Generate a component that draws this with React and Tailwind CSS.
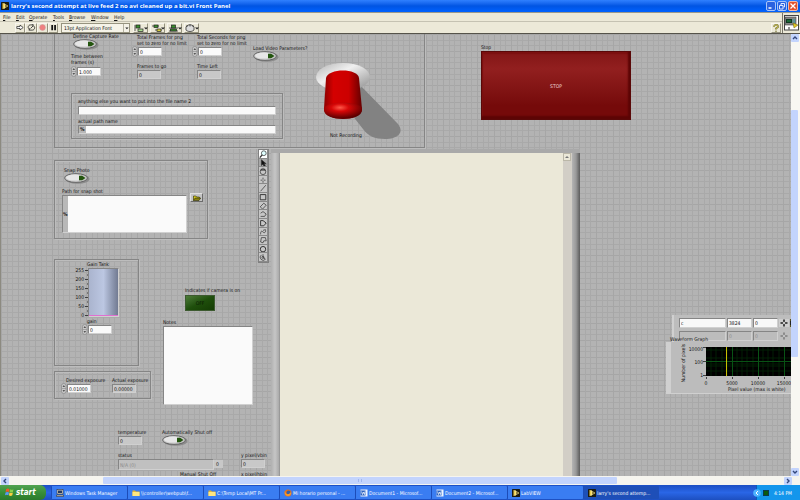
import React from "react";

const GRID =
  "bg-[#b3b3b3] [background-image:linear-gradient(90deg,#a6a6a6_1px,transparent_1px,transparent_6px,#a9a9a9_6px,#a9a9a9_7px,transparent_7px,transparent_11px,#a9a9a9_11px,#a9a9a9_12px,transparent_12px),linear-gradient(#a6a6a6_1px,transparent_1px,transparent_6px,#a9a9a9_6px,#a9a9a9_7px,transparent_7px,transparent_11px,#a9a9a9_11px,#a9a9a9_12px,transparent_12px)] [background-size:17px_17px]";
const SUNKEN = "border border-t-[#858585] border-l-[#858585] border-b-[#d0d0d0] border-r-[#d0d0d0]";
const GROUP = "border border-[#858585] shadow-[inset_1px_1px_0_#bdbdbd,1px_1px_0_#bdbdbd]";

function LabviewIcon() {
  return (
    <svg viewBox="0 0 16 16" className="w-2 h-2 shrink-0">
      <rect width="16" height="16" rx="1" fill="#1c1b10" />
      <path d="M3 3h4v10H3M7 4l7 4-7 4z" fill="#f0d050" stroke="#f7e896" strokeWidth="1" />
      <path d="M8 8h4M10 6v4" stroke="#222" strokeWidth="1" />
    </svg>
  );
}

function FolderIcon() {
  return (
    <svg viewBox="0 0 16 16" className="w-2 h-2 shrink-0">
      <path d="M1 3h5l2 2h7v9H1z" fill="#e8b830" />
      <path d="M1 6h14v8H1z" fill="#ffe680" />
    </svg>
  );
}

function WordIcon() {
  return (
    <svg viewBox="0 0 16 16" className="w-2 h-2 shrink-0">
      <rect x="1" y="1" width="14" height="14" fill="#eef4ff" />
      <rect x="1" y="3" width="10" height="10" fill="#2b62c0" />
      <path d="M3 5l2 6 2-5 2 5 1-6" fill="none" stroke="#fff" strokeWidth="1.4" />
    </svg>
  );
}

function FirefoxIcon() {
  return (
    <svg viewBox="0 0 16 16" className="w-2 h-2 shrink-0">
      <circle cx="8" cy="8" r="7" fill="#e8701a" />
      <circle cx="9" cy="7" r="4" fill="#3660a8" />
      <path d="M2 4c1 6 4 7 8 6l4-4c1 5-3 9-7 8S0 9 2 4z" fill="#f79a28" />
    </svg>
  );
}

function ComputerIcon() {
  return (
    <svg viewBox="0 0 16 16" className="w-2 h-2 shrink-0">
      <rect x="2" y="1" width="12" height="9" fill="#d8d4c8" stroke="#222" />
      <rect x="4" y="3" width="8" height="5" fill="#26395c" />
      <path d="M1 12h14v3H1z" fill="#c8c4b8" stroke="#222" />
    </svg>
  );
}

function Spinner() {
  return (
    <svg viewBox="0 0 6 11" className="w-[6px] h-[11px] shrink-0">
      <rect x="0.5" y="0.5" width="4.5" height="10" rx="2.2" fill="#c9c9c9" stroke="#888" strokeWidth="0.7" />
      <path d="M1.5 4L2.8 2l1.3 2zM1.5 7l1.3 2 1.3-2z" fill="#555" />
      <path d="M1 5.5h4" stroke="#888" strokeWidth="0.6" />
    </svg>
  );
}

function Numeric({ label, value, spinner, inset, readOnly }) {
  return (
    <label className="block w-6 shrink-0 whitespace-pre">
      <span className="block">{label}</span>
      <span className={inset ? "flex items-center pt-px" : spinner ? "flex items-center -ml-[5px]" : "flex pt-px"}>
        {spinner && <Spinner />}
        <input
          readOnly={readOnly}
          defaultValue={value}
          className={SUNKEN + " block w-6 h-[9px] shrink-0 px-px " + (readOnly ? "bg-[#c8c8c8]" : "bg-[#fafafa]")}
        />
      </span>
    </label>
  );
}

function OvalButton({ label }) {
  return (
    <div className="flex flex-col items-start whitespace-nowrap">
      <span>{label}</span>
      <button aria-label={label} className="block w-[26px] h-[11px]">
        <svg viewBox="0 0 26 11" className="w-full h-full">
          <ellipse cx="13.5" cy="6" rx="12" ry="4.8" fill="#8b8b8b" />
          <ellipse cx="12" cy="5" rx="11.4" ry="4.4" fill="#c8c8c8" stroke="#606060" strokeWidth="0.9" />
          <ellipse cx="10.5" cy="4.6" rx="8.5" ry="3" fill="#e6e6e6" />
          <path d="M15 2.8h3.2l3.2 2.1-3.2 2.3H15z" fill="#23550e" />
        </svg>
      </button>
    </div>
  );
}

function RecordSwitch() {
  return (
    <svg viewBox="0 0 90 78" className="w-[90px] h-[78px]">
      <defs>
        <linearGradient id="plate" x1="0" y1="0" x2="1" y2="1">
          <stop offset="0" stopColor="#b4b4b4" />
          <stop offset="0.4" stopColor="#f0f0f0" />
          <stop offset="1" stopColor="#8a8a8a" />
        </linearGradient>
        <linearGradient id="cap" x1="0" x2="1">
          <stop offset="0" stopColor="#8c0000" />
          <stop offset="0.25" stopColor="#d40000" />
          <stop offset="0.65" stopColor="#cc0000" />
          <stop offset="1" stopColor="#620000" />
        </linearGradient>
        <radialGradient id="tip" cx="0.42" cy="0.3" r="0.65">
          <stop offset="0" stopColor="#ff5a4a" />
          <stop offset="0.35" stopColor="#d80808" />
          <stop offset="1" stopColor="#5c0000" />
        </radialGradient>
      </defs>
      <path d="M44 22L83 62c7 9-1 15-13 15-10 0-17-3-22-10L30 44z" fill="#828282" />
      <ellipse cx="28" cy="15" rx="27" ry="14" fill="url(#plate)" />
      <path d="M11 16C13 6 43 6 44 16l3 31c0 13-38 13-38 0z" fill="url(#cap)" />
      <path d="M9 46C12 39 44 39 47 46v2c0 12-38 12-38 0z" fill="url(#tip)" />
    </svg>
  );
}

function CaptureGroup() {
  return (
    <section className="flex w-[371px] h-[114px] shrink-0 border border-t-0 border-[#858585] shadow-[1px_1px_0_#bdbdbd]">
      <div className="w-[228px] shrink-0 pl-4">
        <div className="flex h-[59px]">
          <div className="w-[66px] shrink-0">
            <div className="pl-[2px] -mt-px"><OvalButton label="Define Capture Rate" /></div>
            <div className="pt-[3px]">
              <Numeric label={"Time between\nframes (s)"} value="1.000" spinner inset />
            </div>
          </div>
          <div className="w-[60px] shrink-0 space-y-[6px]">
            <Numeric label={"Total Frames for png\nset to zero for no limit"} value="0" spinner />
            <Numeric label="Frames to go" value="0" readOnly />
          </div>
          <div className="w-14 shrink-0 space-y-[6px]">
            <Numeric label={"Total Seconds for png\nset to zero for no limit"} value="0" spinner />
            <Numeric label="Time Left" value="0" readOnly />
          </div>
          <div className="pt-[11px] shrink-0"><OvalButton label="Load Video Parameters?" /></div>
        </div>
        <div className={GROUP + " w-[212px] h-[46px] px-[6px] pt-1"}>
          <label className="block">
            anything else you want to put into the file name 2
            <input className={SUNKEN + " block w-full h-[9px] mt-[2px] bg-[#fafafa]"} />
          </label>
          <label className="block mt-[3px]">
            actual path name
            <span className={SUNKEN + " flex h-[9px] mt-px bg-[#b8b8b8]"}>
              <b className="px-px leading-[7px]">%</b>
              <input className="flex-1 min-w-0 bg-[#fafafa]" />
            </span>
          </label>
        </div>
      </div>
      <div className="flex flex-col pl-8 pt-7">
        <RecordSwitch />
        <span className="-mt-[8px] pl-[15px]">Not Recording</span>
      </div>
    </section>
  );
}

function SnapGroup() {
  return (
    <section className={GROUP + " w-[154px] h-[79px] mt-[11px] pl-[7px] pt-[6px]"}>
      <div className="pl-[2px]"><OvalButton label="Snap Photo" /></div>
      <div className="flex items-start gap-[3px] pt-1">
        <label className="block">
          Path for snap shot
          <span className={SUNKEN + " flex items-center w-[125px] h-[38px] mt-px bg-[#b8b8b8]"}>
            <b className="w-[5px]">%</b>
            <textarea className="flex-1 min-w-0 h-full bg-[#fafafa] resize-none" />
          </span>
        </label>
        <button aria-label="Browse for path" className="mt-[5px] w-[13px] h-[9px] flex items-center justify-center bg-[#c4c4c4] border border-t-[#e0e0e0] border-l-[#e0e0e0] border-b-[#6c6c6c] border-r-[#6c6c6c]">
          <svg viewBox="0 0 8 6" className="w-2 h-[6px]">
            <path d="M0.5 5.5V1h2.3l1 1h2.6v1.2" fill="#d8cc20" stroke="#2a2800" strokeWidth="0.6" />
            <path d="M0.5 5.5L2.2 3h5.5L6 5.5z" fill="#8a8210" stroke="#2a2800" strokeWidth="0.6" />
          </svg>
        </button>
      </div>
    </section>
  );
}

const TOOLS = [
  ["Zoom", <><circle cx="6" cy="4" r="3" fill="#e0ffff" /><path d="M4 6L1 9.5" strokeWidth="1.6" /></>],
  ["Select", <path d="M3 1v7l2-1.5L6.5 10l1.5-1L6.5 6H9z" fill="#111" />],
  ["Pan", <><circle cx="5" cy="6" r="3.5" /><path d="M1.5 4h7M3 4V2M5 4V1M7 4V2" /></>],
  ["Point", <path d="M5 2v2.4M5 6v2.4M2 5.2h2.2M6 5.2h2.2" />],
  ["Line", <path d="M2 9L8.5 1.5" />],
  ["Rectangle", <path d="M1.5 2h7v6.5h-7z" strokeWidth="1.2" />],
  ["Rotated rectangle", <path d="M1.5 6L6 1.5 9 4 4.5 8.8z" />],
  ["Polyline", <path d="M2 4l3-2 4 3-2 3H2" />],
  ["Polygon", <path d="M2 2h3l4 3-3 3.5H2z" strokeWidth="1.2" />],
  ["Freehand line", <path d="M2 8c0-4 1-5 3-3s4 0 3-3L5 3" />],
  ["Freehand region", <path d="M3 2h5l1 4H6l-1 2.5-3-1z" />],
  ["Oval", <circle cx="5" cy="5.2" r="3.4" strokeWidth="1.2" />],
  ["Annulus", <><path d="M5 1.5v3.7l3 2.6A3.7 3.7 0 1 1 3 2.4" /><circle cx="5" cy="5.5" r="1.3" /></>],
];

function ToolPalette() {
  return (
    <div className="grid grid-rows-13 w-[11px] h-[114px] shrink-0 border border-[#808080] bg-[#c8c8c8]">
      {TOOLS.map(([name, shape], i) => (
        <button
          key={name}
          aria-label={name}
          className={"block w-[9px] min-h-0 overflow-hidden border-b border-r border-[#8a8a8a] " + (i === 0 ? "bg-white" : i === 1 ? "bg-[#a8a8a8]" : "bg-[#c6c6c6]")}
        >
          <svg viewBox="0 0 10 10" className="w-2 h-2" fill="none" stroke="#333" strokeWidth="0.9">{shape}</svg>
        </button>
      ))}
    </div>
  );
}

function GainGroup() {
  return (
    <section className={GROUP + " w-[85px] h-[107px] pt-px"}>
      <div className="pl-8">Gain Tank</div>
      <div className="flex pl-[18px]">
        <div className="w-[11px] h-[51px] flex flex-col justify-between text-right shrink-0">
          {["255", "200", "150", "100", "50", "0"].map((t) => <span key={t}>{t}</span>)}
        </div>
        <svg viewBox="0 0 4 51" className="w-1 h-[51px] shrink-0" stroke="#222" strokeWidth="0.8">
          <path d="M1 3.5h3M1 12.5h3M1 21.5h3M1 30.5h3M1 39.5h3M1 48.5h3M3 8h1M3 17h1M3 26h1M3 35h1M3 44h1" />
        </svg>
        <div className={SUNKEN + " mt-px w-[31px] h-[49px] bg-linear-to-r from-[#aab4ce] via-[#bcc7e2] to-[#727b92]"}>
          <div className="h-full border-b border-[#e070d0]" />
        </div>
      </div>
      <div className="pl-8"><Numeric label="gain" value="0" spinner /></div>
    </section>
  );
}

function ExposureGroup() {
  return (
    <section className={GROUP + " flex gap-[22px] w-[97px] h-7 mt-[5px] pl-[11px] pt-[5px]"}>
      <Numeric label="Desired exposure" value="0.01000" spinner />
      <Numeric label="Actual exposure" value="0.00000" readOnly />
    </section>
  );
}

function StatusArea() {
  return (
    <section className="mt-6 pl-16">
      <div className="flex gap-5">
        <Numeric label="temperature" value="0" readOnly />
        <OvalButton label="Automatically Shut off" />
      </div>
      <div className="flex items-start mt-[6px]">
        <label className="block w-[96px]">
          status
          <input readOnly defaultValue="N/A (0)" className={SUNKEN + " block w-full h-[11px] mt-px px-px bg-[#c0c0c0] text-[#8a8a8a]"} />
        </label>
        <output aria-label="status code" className="mt-2 w-[9px] h-2 bg-[#c8c8c8] px-[2px] leading-[8px]">0</output>
        <div className="ml-[18px]"><Numeric label="y pixel/vbin" value="0" readOnly /></div>
      </div>
      <div className="flex pl-[62px] pt-px whitespace-nowrap">
        <span className="w-[61px]">Manual Shut Off</span>
        <span>x pixel/hbin</span>
      </div>
    </section>
  );
}

function PictureDisplay() {
  return (
    <section aria-label="Camera image" className="flex w-[309px] shrink-0 border-t-4 border-t-[#a9a9a9] bg-[#ebe8d8]">
      <div className="w-[9px] bg-linear-to-r from-[#b0b0b0] via-[#c6c6c6] to-[#aaaaaa] border-r border-[#999]" />
      <div className="flex-1" />
      <div className="w-[9px] bg-[#d2cec6]">
        <button aria-label="Scroll image up" className="flex w-2 h-2 items-center justify-center bg-[#ebe8d8] border border-[#bbb7a8]">
          <svg viewBox="0 0 4 4" className="w-1 h-1"><path d="M0 3h4L2 1z" fill="#777" /></svg>
        </button>
      </div>
      <div className="w-2 bg-linear-to-r from-[#b4b4b4] via-[#999999] to-[#5c5c5c]" />
    </section>
  );
}

function CursorRow({ name, x, y, dim }) {
  const field = SUNKEN + " block h-[10px] min-w-0 shrink-0 px-px " + (dim ? "bg-[#bcbcbc] text-[#8d8d8d]" : "bg-[#f8f8f8]");
  return (
    <div className="flex items-center gap-px">
      <input aria-label="Cursor name" defaultValue={name} className={field + " w-[47px]"} />
      <input aria-label="Cursor x" defaultValue={x} className={field + " w-[25px]"} />
      <input aria-label="Cursor y" defaultValue={y} className={field + " w-[25px]"} />
      <button aria-label="Move cursor" className={"w-[10px] h-2 shrink-0 " + (dim ? "opacity-40" : "bg-[#cfcfcf]")}>
        <svg viewBox="0 0 9 8" className="w-full h-full"><path d="M4.5 0.5V7.5M1 4h7" stroke="#222" strokeWidth="1.6" /><circle cx="4.5" cy="4" r="1.2" fill="#ccc" /></svg>
      </button>
      <button aria-label="Lock cursor" className={"w-2 h-2 shrink-0 " + (dim ? "bg-[#bbb]" : "bg-[#222] border-y-2 border-[#555020]")} />
    </div>
  );
}

function WaveformGraph() {
  return (
    <section className="flex flex-col items-end w-[125px] shrink-0 ml-auto pt-[166px]">
      <div className="w-[119px] h-[27px] pl-[5px] pt-[3px] space-y-[3px] overflow-hidden bg-[#bdbdbd] border-l-2 border-[#d0d0d0]">
        <CursorRow name="c" x="3824" y="0" />
        <CursorRow name="" x="0" y="0" dim />
      </div>
      <div className="relative w-full -mt-[6px] pl-1">Waveform Graph</div>
      <div className="w-full h-[52px] pt-1 flex bg-[#bcbcbc] border-l-[5px] border-b border-[#d0d0d0]">
        <div className="w-[15px] h-[34px] flex justify-end items-center">
          <span className="[writing-mode:vertical-rl] rotate-180 whitespace-nowrap">Number of pixels</span>
        </div>
        <div className="flex-1 min-w-0">
          <div className="flex">
            <div className="w-[17px] h-[32px] flex flex-col justify-between text-right">
              <span>10000</span><span>100</span><span>1</span>
            </div>
            <svg viewBox="0 0 88 34" className="w-[88px] h-[34px] shrink-0">
              <rect x="3" y="1" width="85" height="29" fill="#000" />
              <path d="M8 1v29M13 1v29M19 1v29M24 1v29M34 1v29M39 1v29M44 1v29M50 1v29M60 1v29M65 1v29M70 1v29M76 1v29M3 4h85M3 12h85M3 18h85M3 20h85M3 25h85" stroke="#022606" strokeWidth="0.8" />
              <path d="M29.5 1v29M55.5 1v29M81.5 1v29M3 15.5h85" stroke="#085214" strokeWidth="1" />
              <path d="M23.5 1v29" stroke="#c8c000" strokeWidth="1" />
              <path d="M0 1.5h3M0 15.5h3M0 29.5h3M3.5 31v2M29.5 31v2M55.5 31v2M81.5 31v2" stroke="#222" strokeWidth="0.8" />
            </svg>
          </div>
          <div className="flex pl-[7px] whitespace-nowrap text-center">
            <span className="w-[26px] shrink-0">0</span>
            <span className="w-[26px] shrink-0">5000</span>
            <span className="w-[26px] shrink-0">10000</span>
            <span className="w-[26px] shrink-0">15000</span>
          </div>
          <div className="pl-[42px] whitespace-nowrap">Pixel value (max is white)</div>
        </div>
      </div>
    </section>
  );
}

function TitleBar() {
  return (
    <header className="flex items-center h-3 shrink-0 gap-px px-px bg-linear-to-b from-[#2f80ff] via-[#0054e3] to-[#0062ff] text-white">
      <LabviewIcon />
      <h1 className="flex-1 font-bold text-[6px] leading-[8px] pl-px [font-family:'Open_Sans',sans-serif]">larry's second attempt at live feed 2 no avi cleaned up a bit.vi Front Panel</h1>
      <div className="flex gap-px pr-px">
        <button aria-label="Minimize" className="w-[10px] h-[10px] rounded-xs border border-[#a8c4f8] bg-[#2a62e0]">
          <svg viewBox="0 0 8 8"><path d="M1.5 6h3" stroke="#fff" strokeWidth="1.5" /></svg>
        </button>
        <button aria-label="Restore" className="w-[10px] h-[10px] rounded-xs border border-[#a8c4f8] bg-[#2a62e0]">
          <svg viewBox="0 0 8 8" fill="none" stroke="#dfe9ff"><path d="M1.5 3.5h3.5V7H1.5zM3 3V1.5h3.5V5H5.5" /></svg>
        </button>
        <button aria-label="Close" className="w-[10px] h-[10px] rounded-xs border border-[#f0b8a8] bg-[#e0502c]">
          <svg viewBox="0 0 8 8"><path d="M1.5 1.5l5 5M6.5 1.5l-5 5" stroke="#fff" strokeWidth="1.3" /></svg>
        </button>
      </div>
    </header>
  );
}

const MENUS = [
  ["File", "w-[13px]"],
  ["Edit", "w-[13px]"],
  ["Operate", "w-[24px]"],
  ["Tools", "w-[16px]"],
  ["Browse", "w-[22px]"],
  ["Window", "w-[23px]"],
  ["Help", "w-[14px]"],
];

const TOOL_BTN = "flex items-center justify-center h-[10px] bg-[#ece9d8] border border-t-[#f8f6ee] border-l-[#f8f6ee] border-b-[#96937f] border-r-[#96937f]";

const DROPDOWNS = [
  ["Align objects", <><path d="M1 1v6" /><rect x="2" y="1" width="4" height="3" fill="#3b8f2e" /><rect x="4" y="5" width="5" height="2.5" fill="#aadd90" /></>],
  ["Distribute objects", <><path d="M1 2h7M4 6h7" /><rect x="3" y="1" width="4" height="2.5" fill="#3b8f2e" /><rect x="6" y="5" width="4" height="2.5" fill="#d8d040" /></>],
  ["Resize objects", <><path d="M1 4h9M1 7h9" /><rect x="3.500" y="1" width="4" height="3" fill="#3b8f2e" /><rect x="2.500" y="5" width="6" height="2" fill="#3b8f2e" /></>],
  ["Reorder", <><path d="M1 3c2-3 6-3 8 0v3c-2 2-6 2-8 0z" fill="#ddd" /><path d="M2 1v2M5 0.5v2M8 1v2" /></>],
];

function MenuArea() {
  return (
    <div className="flex h-[22px] shrink-0 bg-[#ece9d8] border-b border-b-[#55534a] border-t border-t-[#9a988c]">
      <div className="flex-1 min-w-0">
        <nav className="flex items-center h-[9px] pl-[3px] border-b border-[#c5c2b2]">
          {MENUS.map(([m, w]) => (
            <button key={m} className={w + " text-left leading-[8px]"}><u>{m[0]}</u>{m.slice(1)}</button>
          ))}
        </nav>
        <div className="flex items-center h-[11px] pl-[15px] pr-px">
          <button aria-label="Run" className={TOOL_BTN + " w-[10px]"}>
            <svg viewBox="0 0 10 8" className="w-2 h-[7px] shrink-0"><path d="M1 2.800h4V1l4 3-4 3V5.200H1z" fill="#fff" stroke="#222" strokeWidth="0.900" /></svg>
          </button>
          <button aria-label="Run continuously" className={TOOL_BTN + " w-[12px]"}>
            <svg viewBox="0 0 10 8" className="w-[9px] h-[7px] shrink-0" fill="none" stroke="#222" strokeWidth="0.900"><path d="M3 6c-3-1-2-5 1-5h3L6 0M6 2c4 0 3 5 0 5H2l1-2M4 5l3-3" /></svg>
          </button>
          <button aria-label="Abort" className={TOOL_BTN + " w-[11px]"}>
            <svg viewBox="0 0 8 8" className="w-[7px] h-[7px] shrink-0"><circle cx="4" cy="4" r="3.300" fill="#f08080" stroke="#c9a0a0" strokeWidth="0.600" /></svg>
          </button>
          <button aria-label="Pause" className={TOOL_BTN + " w-[10px]"}>
            <svg viewBox="0 0 8 8" className="w-[7px] h-[7px] shrink-0"><path d="M1.5 1h2v6h-2zM4.800 1h2v6h-2z" fill="#111" /></svg>
          </button>
          <div className="flex h-[10px] w-[69px] ml-[3px] border border-[#96937f] bg-[#f5f3e8]">
            <select aria-label="Font" className="flex-1 min-w-0 appearance-none pl-[2px] leading-[8px]">
              <option>13pt Application Font</option>
            </select>
            <svg viewBox="0 0 6 8" className="w-[6px] h-2 border-l border-[#b5b2a2]"><path d="M1.5 3.5h4l-2 2z" fill="#222" /></svg>
          </div>
          <div className="flex gap-[2px] pl-[3px]">
            {DROPDOWNS.map(([name, shape]) => (
              <button key={name} aria-label={name} className={TOOL_BTN + " w-[15px]"}>
                <svg viewBox="0 0 14 8" className="w-[14px] h-2 shrink-0" stroke="#222" strokeWidth="0.7">
                  {shape}
                  <path d="M10 3.5h4l-2 2z" fill="#222" stroke="none" />
                </svg>
              </button>
            ))}
          </div>
          <button aria-label="Context help" className={TOOL_BTN + " w-[10px] ml-auto"}>
            <svg viewBox="0 0 8 8" className="w-2 h-2 shrink-0" fill="none"><path d="M2 3c0-3 4.500-3 4 0L4 4.500V5.500" stroke="#6a6620" strokeWidth="1.600" /><path d="M2 3c0-3 4.500-3 4 0L4 4.500V5.500" stroke="#efe67a" strokeWidth="0.700" /><circle cx="4" cy="7.200" r="0.700" fill="#6a6620" /></svg>
          </button>
        </div>
      </div>
      <div className="w-[18px] py-[2px] px-px border-l border-[#77756a]">
        <svg viewBox="0 0 15 16" className="w-[15px] h-4">
          <rect x="0.5" y="0.5" width="14" height="14.5" fill="#fff" stroke="#444" />
          <rect x="1" y="2" width="11" height="8" fill="#858585" stroke="#444" strokeWidth="0.6" />
          <rect x="2" y="4" width="6" height="4" fill="#103820" />
          <path d="M3 6h4" stroke="#30c060" strokeWidth="0.7" />
          <path d="M9 4v4M10.5 4v4" stroke="#3fa0a0" strokeWidth="0.8" />
          <path d="M9 8l5 2-4 3z" fill="#e0c820" stroke="#6a6010" strokeWidth="0.5" />
          <path d="M5 12v2.5" stroke="#222" />
        </svg>
      </div>
    </div>
  );
}

function ArrowButton({ label, d }) {
  return (
    <button aria-label={label} className="flex w-2 h-2 shrink-0 items-center justify-center rounded-[1px] bg-[#c3d4fd]">
      <svg viewBox="0 0 8 8" className="w-2 h-2"><path d={d} fill="none" stroke="#34487c" strokeWidth="1.4" /></svg>
    </button>
  );
}

const TASKS = [
  ["Windows Task Manager", <ComputerIcon />],
  ["\\\\controller\\webpub\\f...", <FolderIcon />],
  ["C:\\Temp Local\\MT Pr...", <FolderIcon />],
  ["Mi horario personal - ...", <FirefoxIcon />],
  ["Document1 - Microsof...", <WordIcon />],
  ["Document2 - Microsof...", <WordIcon />],
  ["LabVIEW", <LabviewIcon />],
  ["larry's second attemp...", <LabviewIcon />],
];

function Taskbar() {
  return (
    <footer className="flex h-[15px] shrink-0 bg-linear-to-b from-[#1c4fc4] via-[#2a66e6] to-[#1d4fc0] text-white">
      <button className="flex items-center gap-[2px] w-[46px] shrink-0 pl-[5px] rounded-r-md bg-linear-to-b from-[#51a350] via-[#388f38] to-[#2c7a2c] italic font-bold text-[8px] leading-[12px]">
        <svg viewBox="0 0 16 16" className="w-[9px] h-[9px]">
          <path d="M2 2q3-2 6 0L7 7Q4 5 1 7z" fill="#f0562a" />
          <path d="M9 2q3 2 6 0l-1 5q-3 2-6 0z" fill="#8bd04a" />
          <path d="M1 8q3-2 6 0l-1 5q-3-2-6 0z" fill="#5a9af8" />
          <path d="M8 8q3 2 6 0l-1 5q-3 2-6 0z" fill="#fbd040" />
        </svg>
        start
      </button>
      <div className="flex flex-1 pl-[5px] py-px">
        {TASKS.map(([name, icon], i) => (
          <button
            key={name}
            className={"flex items-center gap-px w-[76px] pl-[4px] whitespace-nowrap rounded-[1px] border-l border-[#1c4cb8] " + (i === 7 ? "bg-[#1e4fb8]" : "bg-[#3a7df2]")}
          >
            {icon}
            {name}
          </button>
        ))}
      </div>
      <div className="flex items-center gap-[2px] w-[44px] pr-2 shrink-0 bg-[#1396ec] border-l border-[#0c5cb8]">
        <svg viewBox="0 0 8 8" className="-ml-1 w-2 h-2 shrink-0"><circle cx="4" cy="4" r="3.8" fill="#4eb4ff" /><path d="M5 2L3 4l2 2" fill="none" stroke="#fff" /></svg>
        <span className="w-[6px] h-[6px] shrink-0 bg-[#0b5a10] border border-[#0a3a50]" />
        <time className="ml-auto whitespace-nowrap">4:14 PM</time>
      </div>
    </footer>
  );
}

export default function App() {
  return (
    <div className="flex flex-col h-screen overflow-hidden text-[5px] leading-[6px] text-[#111] [font-family:'DejaVu_Sans_Condensed','DejaVu_Sans',sans-serif]">
      <TitleBar />
      <MenuArea />
      <div className="flex flex-1 min-h-0">
        <main className={GRID + " flex-1 min-w-0 overflow-hidden border-l border-[#8c8a80]"}>
          <div className="flex h-[115px] pl-[53px]">
            <CaptureGroup />
            <div className="ml-14 pt-[10px]">
              <div>Stop</div>
              <button className="block w-[150px] h-[69px] mt-px text-[#f0d8d8] border border-[#5a0808] bg-linear-to-b from-[#861818] from-5% via-[#921f1f] via-25% to-[#750a0a] to-80% shadow-[inset_-2px_-3px_2px_#5c0505,inset_1px_2px_1px_#7c1010]">
                STOP
              </button>
            </div>
          </div>
          <div className="flex">
            <div className="w-[270px] shrink-0 pl-[53px]">
              <div className="flex justify-between h-[110px] pr-[2px]">
                <SnapGroup />
                <ToolPalette />
              </div>
              <div className="flex">
                <div className="w-[109px] shrink-0">
                  <GainGroup />
                  <ExposureGroup />
                </div>
                <div className="pt-7">
                  <div className="pl-[22px] whitespace-nowrap">
                    Indicates if camera is on
                    <button className="block mt-[2px] w-[30px] h-4 text-[#0b1a04] border border-[#3d5a30] bg-linear-to-br from-[#4d7c38] via-[#1f4f0c] to-[#143c04]">OFF</button>
                  </div>
                  <label className="block pt-2">
                    Notes
                    <textarea className={SUNKEN + " block mt-px w-[90px] h-[79px] bg-[#fafafa] resize-none"} />
                  </label>
                </div>
              </div>
              <StatusArea />
            </div>
            <PictureDisplay />
            <WaveformGraph />
          </div>
        </main>
        <div className="flex flex-col w-[9px] shrink-0 bg-[#f8f7f2]">
          <ArrowButton label="Scroll up" d="M2 5l2-2 2 2" />
          <div className="basis-[68px]" />
          <div className="w-[7px] basis-[247px] rounded-[1px] bg-[#c3d4fd]" />
          <div className="flex-1" />
          <ArrowButton label="Scroll down" d="M2 3l2 2 2-2" />
        </div>
      </div>
      <div className="flex items-center h-[9px] shrink-0 pl-px pr-2 bg-[#f6f5ef]">
        <ArrowButton label="Scroll left" d="M5 2L3 4l2 2" />
        <div className="w-[94px]" />
        <div className="flex items-center justify-center w-[514px] h-[7px] rounded-[1px] bg-[#c3d4fd]">
          <div className="w-1 h-[3px] border-x border-[#9fb5ee]" />
        </div>
        <div className="flex-1" />
        <ArrowButton label="Scroll right" d="M3 2l2 2-2 2" />
      </div>
      <Taskbar />
    </div>
  );
}
